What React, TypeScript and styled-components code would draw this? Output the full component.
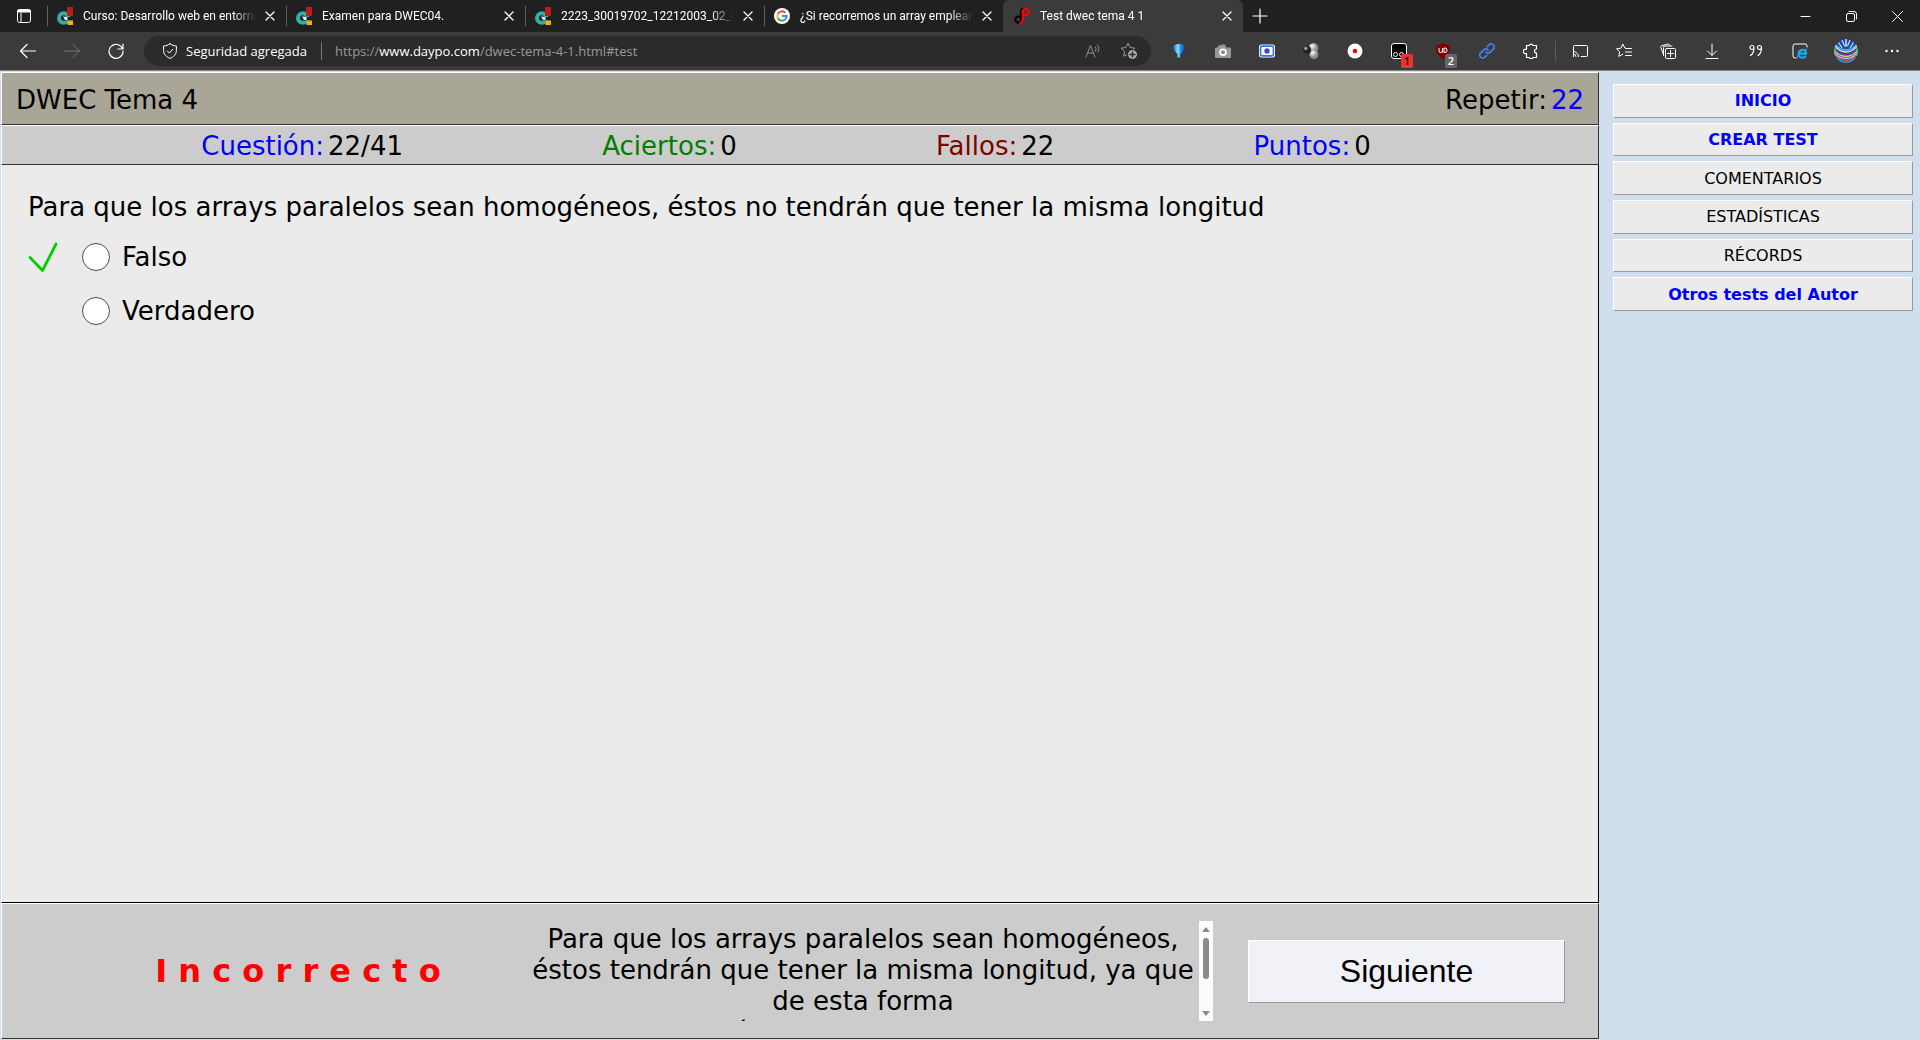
import React from "react";
import styled, { createGlobalStyle } from "styled-components";

const GlobalStyle = createGlobalStyle`
  *, *::before, *::after { box-sizing: border-box; }
  body { margin: 0; background: #cfdfee; }
  button, input { font: inherit; color: inherit; }
  button { background: none; border: 0; padding: 0; cursor: pointer; }
  svg { display: block; flex: none; }
`;

const uiFont = `"Segoe UI", "Open Sans", "Noto Sans", sans-serif`;
const tabFont = `"Segoe UI", Roboto, "Open Sans", sans-serif`;
const pageFont = `Verdana, "DejaVu Sans", sans-serif`;

const Screen = styled.div`
  min-height: 100vh;
  display: flex;
  flex-direction: column;
`;

/* ---------- browser chrome ---------- */

const Chrome = styled.header`
  color: #fff;
  background: #3b3b3b;
  border-bottom: 1px solid #85858f;
`;

const TabBar = styled.div`
  display: flex;
  height: 32px;
  background: #202020;
  font: 12px/16px ${tabFont};
`;

const TabMenu = styled.button`
  width: 47px;
  display: grid;
  place-items: center;
`;

const Tabs = styled.div`
  display: flex;
  min-width: 0;
`;

const Tab = styled.div<{ $active?: boolean }>`
  width: ${(p) => (p.$active ? 240 : 239)}px;
  min-width: 0;
  display: flex;
  align-items: center;
  padding: 0 4px 0 ${(p) => (p.$active ? 11 : 10)}px;
  background: ${(p) =>
    p.$active
      ? "#3b3b3b"
      : "linear-gradient(#606060, #606060) 0 6px / 1px 20px no-repeat"};
  border-radius: ${(p) => (p.$active ? "6px 6px 0 0" : "0")};
`;

const TabTitle = styled.button`
  flex: 1;
  min-width: 0;
  display: flex;
  align-items: center;
  gap: 10px;
  text-align: left;
`;

const TabText = styled.span`
  flex: 1;
  overflow: hidden;
  white-space: nowrap;
  mask-image: linear-gradient(to left, transparent, #000 24px);
`;

const CloseTab = styled.button`
  width: 24px;
  height: 24px;
  display: grid;
  place-items: center;
  margin-left: 2px;
`;

const NewTab = styled.button`
  width: 34px;
  display: grid;
  place-items: center;
`;

const WindowControls = styled.div`
  display: flex;
  margin-left: auto;
`;

const WindowButton = styled.button`
  width: 46px;
  display: grid;
  place-items: center;
`;

const Toolbar = styled.div`
  display: flex;
  align-items: center;
  height: 38px;
  padding: 0 6px;
  font: 13px/18px ${uiFont};
`;

const ToolButton = styled.button<{ $wide?: boolean }>`
  width: ${(p) => (p.$wide ? 48 : 44)}px;
  height: 30px;
  flex: none;
  display: grid;
  place-items: center;
`;

const ToolDivider = styled.span`
  width: 1px;
  height: 20px;
  margin: 0 2px;
  background: #5c5c5c;
`;

const AddressBar = styled.div`
  flex: 1;
  min-width: 0;
  height: 30px;
  margin: 0 6px;
  padding: 0 4px 0 18px;
  display: flex;
  align-items: center;
  border-radius: 15px;
  background: #2b2b2b;
`;

const Security = styled.button`
  display: flex;
  align-items: center;
  gap: 8px;
  padding-right: 14px;
  margin-right: 13px;
  border-right: 1px solid #777;
  white-space: nowrap;
`;

const Address = styled.span`
  flex: 1;
  overflow: hidden;
  white-space: nowrap;
  color: #9a9a9a;
`;

const Host = styled.span`
  color: #fff;
`;

const AddressButton = styled.button`
  width: 36px;
  height: 30px;
  display: grid;
  place-items: center;
`;

const BadgeAnchor = styled.span`
  position: relative;
`;

const Badge = styled.span<{ $bg: string; $ink: string }>`
  position: absolute;
  left: 10px;
  top: 11px;
  width: 12px;
  height: 14px;
  border-radius: 2px;
  background: ${(p) => p.$bg};
  color: ${(p) => p.$ink};
  font-size: 11px;
  font-weight: 600;
  line-height: 14px;
  text-align: center;
`;

/* ---------- quiz page ---------- */

const Page = styled.div`
  flex: 1;
  display: flex;
  padding: 1px 0 1px 1px;
  font: 26px/31px ${pageFont};
  color: #000;
`;

const Quiz = styled.main`
  flex: 1;
  min-width: 0;
  display: flex;
  flex-direction: column;
`;

const Band = styled.div`
  border: 1px solid #333;
  border-top-color: #fff;
  border-left-color: #fff;
`;

const TitleBand = styled(Band)`
  display: flex;
  justify-content: space-between;
  align-items: center;
  height: 53px;
  padding: 3px 14px 0;
  background: #aaa697;
`;

const Title = styled.h1`
  margin: 0;
  font: inherit;
`;

const StatsBand = styled(Band)`
  display: flex;
  justify-content: space-evenly;
  align-items: center;
  height: 40px;
  padding: 3px 28px 0 0;
  background: #ccc;
`;

const Stat = styled.span`
  display: flex;
  gap: 4px;
`;

const StatLabel = styled.span<{ $color: string }>`
  color: ${(p) => p.$color};
`;

const RepeatLink = styled.a`
  color: #00f;
  text-decoration: none;
`;

const QuestionBand = styled(Band)`
  flex: 1;
  border-color: #fff #000 #000 #fff;
  border-top: 0;
  padding: 27px 26px;
  background: #ebebeb;
`;

const Options = styled.fieldset`
  margin: 0;
  padding: 0;
  border: 0;
`;

const Question = styled.legend`
  padding: 0;
  margin-bottom: 7px;
`;

const OptionRow = styled.div`
  display: grid;
  grid-template-columns: 54px 28px 1fr;
  align-items: center;
  height: 54px;
`;

const Radio = styled.input`
  appearance: none;
  grid-column: 2;
  width: 28px;
  height: 28px;
  margin: 0;
  border: 1px solid #4a4a4a;
  border-radius: 50%;
  background: #fff;
  &:checked { box-shadow: inset 0 0 0 6px #fff; background: #0075ff; }
`;

const OptionLabel = styled.label`
  padding-left: 12px;
`;

const ResultBand = styled(Band)`
  display: grid;
  grid-template-columns: 1fr 686px 317px;
  gap: 35px;
  align-items: center;
  height: 136px;
  padding: 0 33px 0 102px;
  background: #ccc;
`;

const Verdict = styled.strong`
  font-size: 32px;
  line-height: 39px;
  text-align: center;
  white-space: nowrap;
  color: #f00;
`;

const Feedback = styled.div`
  display: flex;
  height: 100px;
`;

const FeedbackText = styled.p`
  flex: 1;
  margin: 0;
  padding-top: 3px;
  height: 100px;
  overflow: hidden;
  text-align: center;
`;

const ScrollTrack = styled.div`
  width: 14px;
  padding: 4px 0;
  display: flex;
  flex-direction: column;
  align-items: center;
  background: #fcfcfc;
`;

const ScrollThumb = styled.div`
  width: 6px;
  height: 41px;
  margin: 5px 0 auto;
  border-radius: 3px;
  background: #8b8b8b;
`;

const NextButton = styled.button`
  height: 63px;
  border: 1px solid #999;
  border-top-color: #fff;
  border-left-color: #fff;
  background: #f0f2f7;
  font: 32px/36px Arial, "Liberation Sans", sans-serif;
`;

const Sidebar = styled.nav`
  width: 321px;
  height: 239px;
  padding: 12px 7px 0 14px;
  display: grid;
  grid-auto-rows: 1fr;
  gap: 5px;
  font-size: 16px;
  line-height: 20px;
`;

const SideLink = styled.a<{ $strong?: boolean }>`
  display: grid;
  place-items: center;
  padding-top: 1px;
  border: 1px solid #999;
  border-top-color: #fff;
  border-left-color: #fff;
  background: #ebebeb;
  color: ${(p) => (p.$strong ? "#00f" : "#000")};
  font-weight: ${(p) => (p.$strong ? 700 : 400)};
  text-decoration: none;
`;

/* ---------- drawings ---------- */

const Line = ({
  d,
  size = 16,
  color = "#fff",
  width = 1,
  children,
}: {
  d: string;
  size?: number;
  color?: string;
  width?: number;
  children?: React.ReactNode;
}) => (
  <svg width={size} height={size} viewBox={`0 0 ${size} ${size}`} fill="none" stroke={color} strokeWidth={width} strokeLinecap="round" strokeLinejoin="round" aria-hidden="true">
    <path d={d} />
    {children}
  </svg>
);

const CampusIcon = () => (
  <svg width="16" height="18" viewBox="0 0 16 18" aria-hidden="true">
    <circle cx="6.800" cy="11" r="4.800" fill="#202020" stroke="#2fb0a8" strokeWidth="4" />
    <path d="M8 10h8v3.500H8z" fill="#202020" />
    <path d="M6 9.500l4.500 .5v3H8z" fill="#e8f4f2" />
    <path d="M10 0h6v9h-6z" fill="#c01a18" />
    <path d="M10.500 13.500H16V18h-5.500z" fill="#f0b020" />
  </svg>
);

const GoogleIcon = () => (
  <svg width="16" height="16" viewBox="0 0 16 16" fill="none" aria-hidden="true">
    <circle cx="8" cy="8" r="8" fill="#fff" />
    <g strokeWidth="2">
      <path d="M11.3 4.7A4.6 4.6 0 0 0 4 5.7" stroke="#ea4335" />
      <path d="M4 5.7a4.6 4.6 0 0 0 0 4.6" stroke="#fbbc05" />
      <path d="M4 10.3a4.6 4.6 0 0 0 7.1 1.2" stroke="#34a853" />
      <path d="M8 8h4.6a4.6 4.6 0 0 1-1.5 3.5" stroke="#4285f4" />
    </g>
  </svg>
);

const DaypoIcon = () => (
  <svg width="16" height="18" viewBox="0 0 16 18" fill="none" strokeWidth="2.2" aria-hidden="true">
    <circle cx="4.400" cy="12.600" r="3.100" stroke="#000" />
    <path d="M7 13V5.500q0-3 2-4" stroke="#000" />
    <circle cx="11.800" cy="5" r="3.200" stroke="#f00505" />
    <path d="M8.900 4v8q0 3.600-3.400 4.600" stroke="#f00505" />
  </svg>
);

const CloseIcon = () => <Line size={10} width={1.3} d="M1 1l8 8M9 1l-8 8" />;

const Shield = () => (
  <Line d="M8 .8C10 2.200 12 2.900 14.400 3v4.500c0 3.700-2.600 6.300-6.400 7.900C4.200 13.800 1.600 11.200 1.600 7.500V3C4 2.900 6 2.200 8 .8zM5.300 8l2 2 3.600-3.800" />
);

const Balloon = () => (
  <svg width="16" height="16" viewBox="0 0 16 16" aria-hidden="true">
    <defs>
      <linearGradient id="balloon" x1="0" x2="1">
        <stop offset="0" stopColor="#0a58b8" />
        <stop offset=".4" stopColor="#8fe0ff" />
        <stop offset=".65" stopColor="#1c8df0" />
        <stop offset="1" stopColor="#0a4a9c" />
      </linearGradient>
    </defs>
    <path d="M2 4.500q0-3.500 6-3.500t6 3.500q0 2-4.500 6.500v3.500h-3V11Q2 6.500 2 4.500z" fill="url(#balloon)" />
  </svg>
);

const Camera = () => (
  <svg width="16" height="16" viewBox="0 0 16 16" aria-hidden="true">
    <path d="M1 4.500h2V2.500h2.500L7 1.500h3l1 3h4q1 0 1 1V14q0 1-1 1H1q-1 0-1-1V5.500q0-1 1-1z" fill="#999" />
    <circle cx="8" cy="9.300" r="2.900" fill="#888" stroke="#fff" strokeWidth="1.800" />
  </svg>
);

const Capture = () => (
  <svg width="16" height="14" viewBox="0 0 16 14" aria-hidden="true">
    <rect width="16" height="13" y=".5" rx="2.500" fill="#fff" />
    <rect x="1.600" y="2.100" width="12.800" height="9.800" rx="1.500" fill="#fff" stroke="#2878e8" strokeWidth="1.600" />
    <circle cx="8" cy="7" r="2.700" fill="#4a45d8" />
  </svg>
);

const Spheres = () => (
  <svg width="16" height="16" viewBox="0 0 16 16" aria-hidden="true">
    <defs>
      <radialGradient id="light" cx=".35" cy=".3"><stop offset="0" stopColor="#fff" /><stop offset="1" stopColor="#8c8c8c" /></radialGradient>
      <radialGradient id="dark" cx=".35" cy=".3"><stop offset="0" stopColor="#ddd" /><stop offset=".6" stopColor="#222" /></radialGradient>
    </defs>
    <circle cx="10.500" cy="5" r="4.800" fill="url(#light)" />
    <circle cx="11" cy="11.500" r="4.500" fill="url(#light)" />
    <circle cx="4" cy="7" r="4" fill="url(#dark)" />
  </svg>
);

const Recorder = () => (
  <svg width="16" height="16" viewBox="0 0 16 16" aria-hidden="true">
    <circle cx="8" cy="8" r="7.500" fill="#fff" />
    <circle cx="8" cy="8" r="2.300" fill="#e01010" />
  </svg>
);

const Monkey = () => (
  <svg width="16" height="16" viewBox="0 0 16 16" fill="none" stroke="#fff" aria-hidden="true">
    <rect x=".5" y=".5" width="15" height="15" rx="2.500" fill="#000" />
    <circle cx="4.500" cy="11.500" r="2" />
    <circle cx="10.500" cy="11.500" r="2" />
  </svg>
);

const Blocker = () => (
  <svg width="16" height="16" viewBox="0 0 16 16" fill="none" aria-hidden="true">
    <path d="M8 0c2 1.500 4.500 2 7 2 0 6-1 10.500-7 14C2 12.500 1 8 1 2c2.500 0 5-.5 7-2z" fill="#800000" />
    <path d="M4 5v3q0 1.500 1.500 1.500T7.500 8V5M7.500 9.500V5M9 5h1q2 0 2 2.200T10 9.500H9z" stroke="#fff" />
  </svg>
);

const LinkIcon = () => (
  <Line color="#3f7fee" width={1.8} d="M7 9.200a3 3 0 0 0 4.300 0l3-3A3 3 0 0 0 10 1.900L8.300 3.600M9 6.800a3 3 0 0 0-4.300 0l-3 3A3 3 0 0 0 6 14.100l1.700-1.700" />
);

const Puzzle = () => (
  <Line width={1.2} d="M4 2.500h2.200a2 2 0 0 1 3.800 0h3.500V6a2 2 0 1 0 0 4v4.500H10a2 2 0 0 1-3.800 0H3.500V10.500a2.300 2.300 0 1 1 0-4.200V2.500z" />
);

const Cast = () => (
  <Line d="M1.500 6V3.500a1 1 0 0 1 1-1h12a1 1 0 0 1 1 1v9a1 1 0 0 1-1 1H9M1.500 13.500h.1M1.500 11a2.500 2.500 0 0 1 2.500 2.500M1.500 8.500a5 5 0 0 1 5 5M1.500 6v7" />
);

const FavoritesIcon = () => (
  <Line d="M10.500 5.500L8.800 5 6.800 1 4.800 5.200.6 5.800l3 3-.8 4.600 4-2.200M10 5.500h5.500M9.500 9h6M9.500 12.500h6" />
);

const Collections = () => (
  <Line d="M3 10.500L.8 4.300q-.3-1 .7-1.400L7.800 1q1-.3 1.400.6l.4 1M3.500 12.500v-8q0-1.500 1.500-1.500h7M6.500 5.500h8a1 1 0 0 1 1 1v8a1 1 0 0 1-1 1h-8a1 1 0 0 1-1-1v-8a1 1 0 0 1 1-1zM10.500 7.500v6M7.500 10.500h6" />
);

const Download = () => <Line d="M8 1v11M3.500 8L8 12.500 12.500 8M2 15.500h12" />;

const Quotes = () => (
  <Line d="M6 4.500a2 2 0 1 0-4 0 2 2 0 0 0 4 0q0 6-3.500 8M13.500 4.500a2 2 0 1 0-4 0 2 2 0 0 0 4 0q0 6-3.500 8" width={1.2} />
);

const IeMode = () => (
  <Line d="M4 15H3a2 2 0 0 1-2-2V3a2 2 0 0 1 2-2h10a2 2 0 0 1 2 2v1">
    <path d="M6.500 10.700h7.800a3.900 3.900 0 1 0-1 2.700" stroke="#1fa8e8" strokeWidth="2.200" />
    <path d="M5.500 15q-1.500-2 3-6t6.500-2.500" stroke="#1fa8e8" />
  </Line>
);

const Avatar = () => (
  <svg width="24" height="24" viewBox="0 0 24 24" fill="none" aria-hidden="true">
    <defs><clipPath id="face"><circle cx="12" cy="12" r="12" /></clipPath></defs>
    <g clipPath="url(#face)" strokeWidth="1.300">
      <path d="M0 0h24v24H0z" fill="#27459c" />
      <path d="M0 4q5 7 12 7t12-7" stroke="#3fd0e0" />
      <path d="M0 6q5 7 12 7t12-7" stroke="#d8e0f4" />
      <path d="M0 8.500q5 7 12 7t12-7" stroke="#7a2f9c" />
      <path d="M0 11q5 6.500 12 6.500T24 11" stroke="#e8d040" />
      <path d="M0 13.500q5 6 12 6t12-6" stroke="#b8c8f8" />
      <path d="M1 16q5 5.500 11 5.500T23 16" stroke="#e04878" />
      <path d="M3 19q4 4.500 9 4.500t9-4.500" stroke="#28b090" />
      <path d="M8 1l2.500 6M16 1l-2.500 6M4.500 3.500L8 9M19.500 3.500L16 9" stroke="#9fe4f4" />
      <path d="M12 0v8" stroke="#f0f4ff" />
      <path d="M1 8v9M23 8v9" stroke="#40d060" />
    </g>
  </svg>
);

const More = () => (
  <svg width="16" height="16" viewBox="0 0 16 16" fill="#fff" aria-hidden="true">
    <circle cx="2.500" cy="8" r="1.200" /><circle cx="8" cy="8" r="1.200" /><circle cx="13.500" cy="8" r="1.200" />
  </svg>
);

const Arrow = ({ down }: { down?: boolean }) => (
  <svg width="8" height="8" viewBox="0 0 8 8" fill="#8b8b8b" aria-hidden="true">
    <path d={down ? "M0 2h8L4 7z" : "M0 7h8L4 2z"} />
  </svg>
);

const CheckMark = () => (
  <svg width="30" height="31" viewBox="0 0 30 31" fill="none" stroke="#00d000" strokeWidth="2.800" strokeLinecap="round" strokeLinejoin="round" role="img" aria-label="Respuesta correcta">
    <path d="M2 15.500l12.500 13L28 2" />
  </svg>
);

/* ---------- data ---------- */

const tabs = [
  { title: "Curso: Desarrollo web en entorno", icon: <CampusIcon /> },
  { title: "Examen para DWEC04.", icon: <CampusIcon /> },
  { title: "2223_30019702_12212003_02_EO", icon: <CampusIcon /> },
  { title: "¿Si recorremos un array emplean", icon: <GoogleIcon /> },
  { title: "Test dwec tema 4 1", icon: <DaypoIcon />, active: true },
];

const extensions = [
  { name: "Globo", icon: <Balloon /> },
  { name: "Cámara", icon: <Camera /> },
  { name: "Captura", icon: <Capture /> },
  { name: "Esferas", icon: <Spheres /> },
  { name: "Grabadora", icon: <Recorder /> },
  { name: "Scripts", icon: <Monkey />, badge: "1", bg: "#ee3131", ink: "#000" },
  { name: "Bloqueador", icon: <Blocker />, badge: "2", bg: "#666", ink: "#fff" },
  { name: "Enlaces", icon: <LinkIcon /> },
  { name: "Extensiones", icon: <Puzzle /> },
];

const browserTools = [
  { name: "Transmitir", icon: <Cast /> },
  { name: "Favoritos", icon: <FavoritesIcon /> },
  { name: "Colecciones", icon: <Collections /> },
  { name: "Descargas", icon: <Download /> },
  { name: "Citas", icon: <Quotes /> },
  { name: "Modo Internet Explorer", icon: <IeMode /> },
];

const stats = [
  { label: "Cuestión:", value: "22/41", color: "#00f" },
  { label: "Aciertos:", value: "0", color: "#008000" },
  { label: "Fallos:", value: "22", color: "#800000" },
  { label: "Puntos:", value: "0", color: "#00f" },
];

const options = [
  { id: "falso", text: "Falso", correct: true },
  { id: "verdadero", text: "Verdadero", correct: false },
];

const links = [
  { text: "INICIO", strong: true },
  { text: "CREAR TEST", strong: true },
  { text: "COMENTARIOS" },
  { text: "ESTADÍSTICAS" },
  { text: "RÉCORDS" },
  { text: "Otros tests del Autor", strong: true },
];

export default function App() {
  return (
    <Screen>
      <GlobalStyle />
      <Chrome>
        <TabBar>
          <TabMenu aria-label="Menú de pestañas">
            <Line d="M3.500 1.500h9a2 2 0 0 1 2 2v9a2 2 0 0 1-2 2h-9a2 2 0 0 1-2-2v-9a2 2 0 0 1 2-2zM5 5v9">
              <path d="M2.500 3h11" strokeWidth="3" />
            </Line>
          </TabMenu>
          <Tabs>
            {tabs.map((t) => (
              <Tab key={t.title} $active={t.active}>
                <TabTitle>
                  {t.icon}
                  <TabText>{t.title}</TabText>
                </TabTitle>
                <CloseTab aria-label="Cerrar pestaña"><CloseIcon /></CloseTab>
              </Tab>
            ))}
          </Tabs>
          <NewTab aria-label="Nueva pestaña"><Line d="M8 1v14M1 8h14" width={1.2} /></NewTab>
          <WindowControls>
            <WindowButton aria-label="Minimizar"><Line size={11} d="M1 5.500h9" /></WindowButton>
            <WindowButton aria-label="Restaurar">
              <Line size={11} d="M2 2.500h5a1.500 1.500 0 0 1 1.500 1.500v5a1.500 1.500 0 0 1-1.500 1.500H2A1.500 1.500 0 0 1 .5 9V4A1.500 1.500 0 0 1 2 2.500zM3 .5h5A2.500 2.500 0 0 1 10.500 3v5" />
            </WindowButton>
            <WindowButton aria-label="Cerrar"><Line size={11} d="M.5 .5l10 10M10.500 .5l-10 10" /></WindowButton>
          </WindowControls>
        </TabBar>
        <Toolbar>
          <ToolButton aria-label="Atrás"><Line d="M.500 8h15M7 1.500L.500 8 7 14.500" width={1.2} /></ToolButton>
          <ToolButton aria-label="Adelante"><Line d="M.500 8h15M9 1.500L15.500 8 9 14.500" color="#777" /></ToolButton>
          <ToolButton aria-label="Actualizar"><Line d="M14.600 6A7 7 0 1 0 15 8M15 1v5h-5" width={1.2} /></ToolButton>
          <AddressBar>
            <Security><Shield />Seguridad agregada</Security>
            <Address>https://<Host>www.daypo.com</Host>/dwec-tema-4-1.html#test</Address>
            <AddressButton aria-label="Leer en voz alta">
              <Line color="#8f8f8f" d="M1 14L5.500 2.500 10 14M2.500 10h6M10.500 4q1.500 1.500 0 4M12.500 2q3 3 .5 7" />
            </AddressButton>
            <AddressButton aria-label="Agregar a favoritos">
              <Line size={18} color="#9a9a9a" d="M6.500 12.800l-2.700 1.400.8-4.700L1.200 6.200l4.700-.7L8 1.200l2.100 4.300 4.700.7-1 1">
                <circle cx="12.500" cy="12.500" r="4" fill="#b0b0b0" stroke="#b0b0b0" />
                <path d="M12.500 10v5M10 12.500h5" stroke="#2b2b2b" strokeWidth="1.400" />
              </Line>
            </AddressButton>
          </AddressBar>
          {extensions.map((e) => (
            <ToolButton key={e.name} aria-label={e.name}>
              {e.badge ? (
                <BadgeAnchor>
                  {e.icon}
                  <Badge $bg={e.bg} $ink={e.ink}>{e.badge}</Badge>
                </BadgeAnchor>
              ) : (
                e.icon
              )}
            </ToolButton>
          ))}
          <ToolDivider />
          {browserTools.map((t) => (
            <ToolButton key={t.name} aria-label={t.name}>{t.icon}</ToolButton>
          ))}
          <ToolButton $wide aria-label="Perfil"><Avatar /></ToolButton>
          <ToolButton aria-label="Configuración y más"><More /></ToolButton>
        </Toolbar>
      </Chrome>

      <Page>
        <Quiz>
          <TitleBand>
            <Title>DWEC Tema 4</Title>
            <Stat>
              <StatLabel $color="#000">Repetir:</StatLabel>
              <RepeatLink href="#repetir">22</RepeatLink>
            </Stat>
          </TitleBand>
          <StatsBand>
            {stats.map((s) => (
              <Stat key={s.label}>
                <StatLabel $color={s.color}>{s.label}</StatLabel>
                <span>{s.value}</span>
              </Stat>
            ))}
          </StatsBand>
          <QuestionBand>
            <Options>
              <Question>
                Para que los arrays paralelos sean homogéneos, éstos no tendrán que tener la misma longitud
              </Question>
              {options.map((o) => (
                <OptionRow key={o.id}>
                  {o.correct && <CheckMark />}
                  <Radio type="radio" name="respuesta" id={o.id} />
                  <OptionLabel htmlFor={o.id}>{o.text}</OptionLabel>
                </OptionRow>
              ))}
            </Options>
          </QuestionBand>
          <ResultBand>
            <Verdict>I n c o r r e c t o</Verdict>
            <Feedback>
              <FeedbackText>
                Para que los arrays paralelos sean homogéneos, éstos tendrán que tener la misma longitud, ya que de esta forma
                <br />
                se podría usar un mismo contador
              </FeedbackText>
              <ScrollTrack>
                <Arrow />
                <ScrollThumb />
                <Arrow down />
              </ScrollTrack>
            </Feedback>
            <NextButton>Siguiente</NextButton>
          </ResultBand>
        </Quiz>
        <Sidebar aria-label="Secciones">
          {links.map((l) => (
            <SideLink key={l.text} href="#" $strong={l.strong}>{l.text}</SideLink>
          ))}
        </Sidebar>
      </Page>
    </Screen>
  );
}
